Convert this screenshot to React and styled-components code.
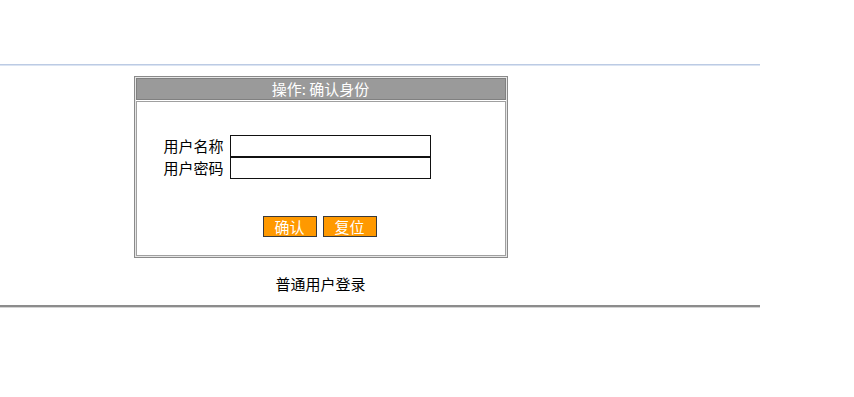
import React from "react";
import styled, { createGlobalStyle } from "styled-components";

const GlobalStyle = createGlobalStyle`
  body {
    margin: 0;
    background: #fff;
    font-family: "Noto Sans CJK SC", "Liberation Sans", sans-serif;
    font-size: 15px;
    color: #000;
  }
`;

const Page = styled.div`
  width: 760px;
  padding-top: 64px;
`;

const TopRule = styled.div`
  height: 1px;
  border-top: 1px solid #bccbe4;
  background: #dbe4f2;
`;

const Main = styled.div`
  width: 641px;
  display: flex;
  flex-direction: column;
  align-items: center;
  padding-top: 10px;
`;

const Box = styled.div`
  width: 370px;
  border: 1px solid #8a8a8a;
  padding: 1px;
  box-shadow: inset 0 0 0 1px #e6e6e6;
  background: #fff;
`;

const Header = styled.div`
  height: 20px;
  line-height: 20px;
  background: #9a9a9a;
  color: #fff;
  text-align: center;
  font-size: 15px;
  border: 1px solid #808080;
`;

const Body = styled.div`
  margin-top: 1px;
  border: 1px solid #a0a0a0;
  padding: 33px 0 18px 27px;
  display: flex;
  flex-direction: column;
  gap: 37px;
`;

const Form = styled.div`
  display: grid;
  grid-template-columns: auto 201px;
  justify-content: start;
  column-gap: 6px;
  align-items: center;
`;

const Label = styled.span`
  line-height: 22px;
  font-size: 15px;
`;

const Input = styled.input`
  box-sizing: border-box;
  width: 201px;
  height: 22px;
  border: 1px solid #111;
  margin: 0;
  padding: 0 2px;
  background: #fff;
`;

const Buttons = styled.div`
  display: flex;
  gap: 6px;
  padding-left: 99px;
`;

const Button = styled.button`
  box-sizing: border-box;
  width: 54px;
  height: 21px;
  padding: 0;
  background: #ff9900;
  color: #fff;
  border: 1px solid #3a3a3a;
  font-family: "Noto Sans CJK SC", sans-serif;
  font-size: 15px;
  line-height: 19px;
`;

const Caption = styled.div`
  margin-top: 16px;
  line-height: 20px;
  font-size: 15px;
`;

const BottomRule = styled.div`
  margin-top: 11px;
  height: 2px;
  background: #8c8c8c;
  border-bottom: 1px solid #d4d4d4;
`;

export default function App() {
  return (
    <Page>
      <GlobalStyle />
      <TopRule />
      <Main>
        <Box>
          <Header>操作: 确认身份</Header>
          <Body>
            <Form>
              <Label>用户名称</Label>
              <Input type="text" />
              <Label>用户密码</Label>
              <Input type="password" />
            </Form>
            <Buttons>
              <Button>确认</Button>
              <Button>复位</Button>
            </Buttons>
          </Body>
        </Box>
        <Caption>普通用户登录</Caption>
      </Main>
      <BottomRule />
    </Page>
  );
}
